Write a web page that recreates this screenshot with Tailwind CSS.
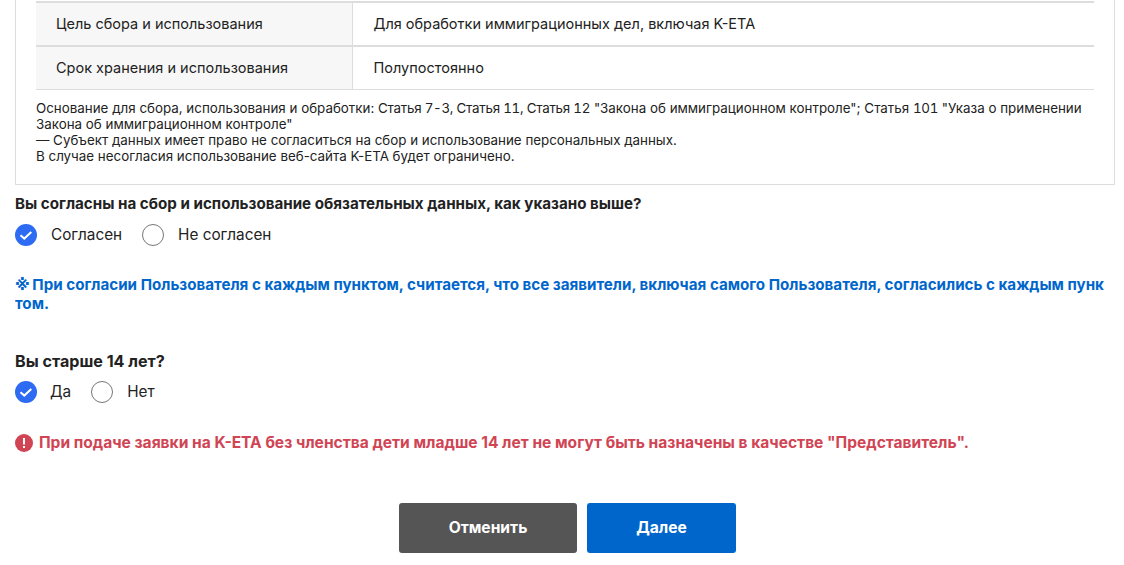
<!DOCTYPE html>
<html lang="ru">
<head>
  <meta charset="UTF-8" />
  <title>K-ETA</title>
  <script src="https://cdn.jsdelivr.net/npm/@tailwindcss/browser@4"></script>
</head>
<body class="bg-white h-[565px] overflow-hidden font-['Inter',sans-serif] text-[#222]">
  <div class="w-[1100px] ml-[15px]">
    <!-- Terms box -->
    <div class="border-x border-b border-[#ddd] h-[185px] px-5 pt-px">
      <table class="w-full border-collapse text-[14.5px] table-fixed">
        <tbody>
          <tr class="h-11 border-y-2 border-[#ddd]">
            <th class="w-[316px] bg-[#f7f7f7] border-r border-[#ddd] pl-5 text-left font-normal">Цель сбора и использования</th>
            <td class="pl-[21px]">Для обработки иммиграционных дел, включая K-ETA</td>
          </tr>
          <tr class="h-[43px] border-b border-[#ddd]">
            <th class="bg-[#f7f7f7] border-r border-[#ddd] pl-5 text-left font-normal">Срок хранения и использования</th>
            <td class="pl-[21px]">Полупостоянно</td>
          </tr>
        </tbody>
      </table>
      <p class="mt-[10px] text-[13.36px] leading-4">Основание для сбора, использования и обработки: <span class="tabular-nums tracking-[-0.25px]">Статья 7-3, Статья 11, Статья 12</span> "Закона об иммиграционном контроле"; Статья <span class="tabular-nums tracking-[-0.3px]">101</span> "Указа о применении Закона об иммиграционном контроле"<br>— Субъект данных имеет право не согласиться на сбор и использование персональных данных.<br>В случае несогласия использование веб-сайта K-ETA будет ограничено.</p>
    </div>

    <h3 class="mt-[9px] text-[15.17px] leading-5 font-bold">Вы согласны на сбор и использование обязательных данных, как указано выше?</h3>
    <div class="mt-[10px] flex items-center h-[22px] text-[15.3px]">
      <svg class="w-[22px] h-[22px]" viewBox="0 0 22 22"><circle cx="11" cy="11" r="11" fill="#2c6bf2"/><path d="M5.5 11.2l3.8 3.4 7-6.6" fill="none" stroke="#fff" stroke-width="2"/></svg>
      <span class="ml-[14px]">Согласен</span>
      <svg class="w-[22px] h-[22px] ml-5" viewBox="0 0 22 22"><circle cx="11" cy="11" r="10.5" fill="#fff" stroke="#777"/></svg>
      <span class="ml-[14px]">Не согласен</span>
    </div>

    <p class="mt-[29px] text-[15.17px] leading-[19px] font-bold text-[#0066cc]"><span class="font-['DejaVu_Sans',sans-serif] leading-[0] mr-[-1px]">※</span> При согласии Пользователя с каждым пунктом, считается, что все заявители, включая самого Пользователя, согласились с каждым пунк<br>том.</p>

    <h3 class="mt-[36px] text-[16.1px] leading-6 font-bold">Вы старше 14 лет?</h3>
    <div class="mt-2 flex items-center h-[22px] text-[15.3px]">
      <svg class="w-[22px] h-[22px]" viewBox="0 0 22 22"><circle cx="11" cy="11" r="11" fill="#2c6bf2"/><path d="M5.5 11.2l3.8 3.4 7-6.6" fill="none" stroke="#fff" stroke-width="2"/></svg>
      <span class="ml-[13px]">Да</span>
      <svg class="w-[22px] h-[22px] ml-5" viewBox="0 0 22 22"><circle cx="11" cy="11" r="10.5" fill="#fff" stroke="#777"/></svg>
      <span class="ml-[14px]">Нет</span>
    </div>

    <div class="mt-[30px] flex items-center h-5 text-[15.55px] font-bold text-[#d04453]">
      <svg class="w-[18px] h-[18px]" viewBox="0 0 18 18"><circle cx="9" cy="9" r="9" fill="#d04453"/><rect x="8" y="4" width="2" height="6.5" fill="#fff"/><rect x="8" y="12" width="2" height="2" fill="#fff"/></svg>
      <span class="ml-[6px]">При подаче заявки на K-ETA без членства дети младше 14 лет не могут быть назначены в качестве "Представитель".</span>
    </div>

    <!-- Buttons -->
    <div class="mt-[50px] flex justify-center gap-[10px] pl-[5px]">
      <button class="w-[178px] h-[50px] rounded-[3px] bg-[#555] text-white text-[15.6px] font-bold">Отменить</button>
      <button class="w-[149px] h-[50px] rounded-[3px] bg-[#0066cc] text-white text-[15.6px] font-bold">Далее</button>
    </div>
  </div>
</body>
</html>
